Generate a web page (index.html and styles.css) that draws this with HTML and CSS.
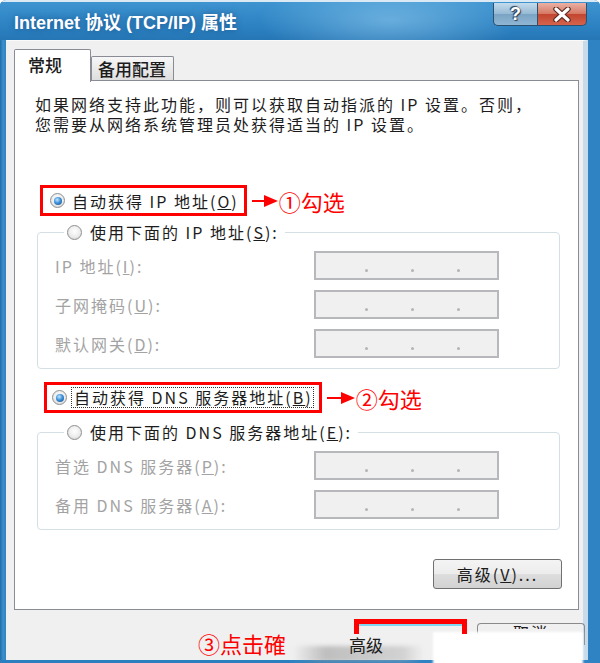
FILE: index.html
```html
<!DOCTYPE html>
<html lang="zh-CN">
    <head>
        <meta charset="UTF-8" />
        <meta name="viewport" content="width=device-width, initial-scale=1.0" />
        <title>Internet 协议 (TCP/IP) 属性</title>
        <link rel="stylesheet" href="styles.css">
    </head>
    <body>
        <div class="window">
            <div class="titlebar">
                <span class="title">Internet 协议 (TCP/IP) 属性</span>
                <div class="caption">
                    <span class="cap help">?</span>
                    <span class="cap close">
                        <svg width="20" height="15" viewBox="0 0 20 15">
                            <path d="M4 2 L16 13 M16 2 L4 13" stroke="#5a2a22" stroke-width="5.5" stroke-linecap="round" fill="none" />
                            <path d="M4 2 L16 13 M16 2 L4 13" stroke="#fff" stroke-width="3.2" stroke-linecap="round" fill="none" />
                        </svg>
                    </span>
                </div>
            </div>

            <div class="client">
                <div class="tabs">
                    <div class="tab active">常规</div>
                    <div class="tab">备用配置</div>
                </div>

                <div class="panel">
                    <p class="intro">如果网络支持此功能，则可以获取自动指派的 IP 设置。否则，<br>您需要从网络系统管理员处获得适当的 IP 设置。</p>

                    <div class="choice first">
                        <label class="radio marked">
                            <span class="dot on"></span>
                            <span>自动获得 IP 地址(<u>O</u>)</span>
                        </label>
                        <span class="note">
                            <svg class="arrow" width="26" height="14" viewBox="0 0 26 14">
                                <path d="M0 7 H14" stroke="#f00" stroke-width="2" />
                                <path d="M12 1 L26 7 L12 13 Z" fill="#f00" />
                            </svg>①勾选
                        </span>
                    </div>

                    <fieldset class="group">
                        <legend>
                            <label class="radio">
                                <span class="dot"></span>
                                <span>使用下面的 IP 地址(<u>S</u>):</span>
                            </label>
                        </legend>
                        <div class="field">
                            <span class="label">IP 地址(<u>I</u>):</span>
                            <span class="ipbox"><i></i><i></i><i></i></span>
                        </div>
                        <div class="field">
                            <span class="label">子网掩码(<u>U</u>):</span>
                            <span class="ipbox"><i></i><i></i><i></i></span>
                        </div>
                        <div class="field">
                            <span class="label">默认网关(<u>D</u>):</span>
                            <span class="ipbox"><i></i><i></i><i></i></span>
                        </div>
                    </fieldset>

                    <div class="choice second">
                        <label class="radio marked">
                            <span class="dot on"></span>
                            <span class="focus">自动获得 DNS 服务器地址(<u>B</u>)</span>
                        </label>
                        <span class="note">
                            <svg class="arrow" width="28" height="14" viewBox="0 0 28 14">
                                <path d="M0 7 H16" stroke="#f00" stroke-width="2" />
                                <path d="M14 1 L28 7 L14 13 Z" fill="#f00" />
                            </svg>②勾选
                        </span>
                    </div>

                    <fieldset class="group dns">
                        <legend>
                            <label class="radio">
                                <span class="dot"></span>
                                <span>使用下面的 DNS 服务器地址(<u>E</u>):</span>
                            </label>
                        </legend>
                        <div class="field">
                            <span class="label">首选 DNS 服务器(<u>P</u>):</span>
                            <span class="ipbox"><i></i><i></i><i></i></span>
                        </div>
                        <div class="field">
                            <span class="label">备用 DNS 服务器(<u>A</u>):</span>
                            <span class="ipbox"><i></i><i></i><i></i></span>
                        </div>
                    </fieldset>

                    <div class="actions">
                        <button class="btn">高级(<u>V</u>)...</button>
                    </div>
                </div>

                <div class="footer">
                    <span class="smudge"></span>
                    <span class="note step">③点击確</span>
                    <div class="ok">
                        <span class="ok-frame"></span>
                        <span class="ok-text">高级</span>
                    </div>
                    <div class="cancel"><span>取消</span></div>
                    <span class="patch"></span>
                </div>
            </div>
            <div class="frame-bottom"></div>
        </div>
    </body>
</html>
```

FILE: styles.css
```css
body {
    margin: 0;
    background: #fff;
    font-family: "Noto Sans CJK SC", "Liberation Sans", sans-serif;
    color: #1c1c1c;
}

.window {
    width: 600px;
    height: 663px;
    display: flex;
    flex-direction: column;
    background: linear-gradient(to right, #1f6ba8 0, #3b8fcb 3px, #2f83c3 6px);
    border-radius: 6px 6px 0 0;
    overflow: hidden;
}

/* title bar */
.titlebar {
    height: 40px;
    flex: none;
    display: flex;
    align-items: flex-start;
    border-top: 2px solid #dbe9f4;
    box-sizing: border-box;
    background:
        radial-gradient(ellipse 130px 40px at 390px 18px, rgba(150, 205, 240, 0.55), transparent),
        linear-gradient(#3d94d0, #2b80c0 70%, #2676b5);
}

.title {
    margin: 6px 0 0 14px;
    font-family: "Liberation Sans", "Noto Sans CJK SC", sans-serif;
    font-weight: bold;
    font-size: 18px;
    color: #fff;
    text-shadow: 0 0 6px rgba(20, 60, 110, 0.6);
}

.caption {
    margin-left: auto;
    margin-right: 13px;
    margin-top: 1px;
    display: flex;
}

.cap {
    height: 23px;
    display: flex;
    align-items: center;
    justify-content: center;
    border: 1px solid #2d4f70;
    border-top: none;
    box-sizing: border-box;
}

.help {
    width: 44px;
    border-radius: 0 0 0 5px;
    border-right: none;
    background: linear-gradient(#c4dbec, #95b9d4 50%, #7ba4c4 52%, #8fb6d3);
    font-family: "Liberation Sans", sans-serif;
    font-weight: bold;
    font-size: 18px;
    color: #fff;
    text-shadow: 0 0 1px #2c3e55, 1px 1px 1px #2c3e55, -1px -1px 1px #2c3e55;
}

.close {
    width: 50px;
    border-radius: 0 0 5px 0;
    background: linear-gradient(#eab1a4, #d67965 48%, #c2452f 52%, #d4644c);
}

/* client area */
.client {
    flex: 1;
    margin: 0 12px 0 6px;
    padding: 8px 4px 0 8px;
    background: #f0f0f0;
    border-top: 1px solid #fafafa;
    border-right: 5px solid #c7dbea;
    display: flex;
    flex-direction: column;
}

.tabs {
    display: flex;
    align-items: flex-end;
    height: 31px;
}

.tab {
    height: 24px;
    padding: 0 7px 0 6px;
    border: 1px solid #898c95;
    border-bottom: none;
    border-radius: 2px 2px 0 0;
    background: linear-gradient(#f7f7f7, #dedede);
    font-size: 17px;
    font-weight: 500;
    line-height: 24px;
    box-sizing: border-box;
}

.tab.active {
    height: 33px;
    width: 77px;
    margin-bottom: -2px;
    padding-left: 13px;
    background: #fff;
    position: relative;
    z-index: 1;
    line-height: 30px;
}

.panel {
    height: 530px;
    box-sizing: border-box;
    border: 1px solid #898c95;
    background: #fff;
    padding: 0 18px 0 20px;
    display: flex;
    flex-direction: column;
}

.intro {
    margin: 13px 0 0;
    font-size: 16px;
    letter-spacing: 2px;
    line-height: 20px;
    white-space: nowrap;
}

/* radio options */
.choice {
    display: flex;
    align-items: center;
}

.choice.first {
    margin-top: 51px;
}

.choice.second {
    margin-top: 13px;
}

.radio {
    display: flex;
    align-items: center;
    gap: 7px;
    font-size: 16px;
    letter-spacing: 2px;
    white-space: nowrap;
}

.radio.marked {
    height: 31px;
    box-sizing: border-box;
    border: 3px solid #f00;
    padding: 0 5px 0 7px;
}

.first .radio.marked {
    margin-left: 5px;
}

.second .radio.marked {
    margin-left: 9px;
    padding-left: 5px;
    gap: 4px;
}

.focus {
    border: 1px dotted #333;
    padding: 0 0 0 2px;
    line-height: 19px;
}

.dot {
    width: 15px;
    height: 15px;
    box-sizing: border-box;
    border-radius: 50%;
    border: 1px solid #8e8f90;
    background: radial-gradient(circle at 50% 40%, #fff 0, #ececec 55%, #cdcdcd 100%);
    display: flex;
    align-items: center;
    justify-content: center;
    flex: none;
}

.dot.on::after {
    content: "";
    width: 8px;
    height: 8px;
    border-radius: 50%;
    background: radial-gradient(circle at 40% 35%, #c2e8ff 0, #3f93da 45%, #0e4684 100%);
}

.note {
    display: flex;
    align-items: center;
    margin-left: 5px;
    color: #f00;
    font-size: 22px;
    line-height: 26px;
    white-space: nowrap;
    flex: none;
}

.arrow {
    margin-right: 1px;
}

/* group boxes */
.group {
    margin: 7px 0 0 2px;
    padding: 10px 0 10px 17px;
    border: 1px solid #d5dfe6;
    border-radius: 4px;
    min-width: 0;
    display: flex;
    flex-direction: column;
    gap: 10px;
}

.group.dns {
    margin-top: 10px;
}

.group legend {
    margin-left: 9px;
    padding: 0 6px 0 3px;
}

.group legend .radio {
    gap: 8px;
    height: 18px;
}

.field {
    display: grid;
    grid-template-columns: 259px 185px;
    align-items: center;
}

.label {
    color: #a3a3a3;
    font-size: 16px;
    letter-spacing: 2px;
    white-space: nowrap;
}

.ipbox {
    height: 29px;
    box-sizing: border-box;
    border: 2px solid #b7b8bc;
    background: #f0f0f0;
    display: flex;
    padding: 16px 0 0 49px;
    gap: 43px;
}

.ipbox i {
    width: 3px;
    height: 3px;
    border-radius: 50%;
    background: #b4b4b4;
}

.actions {
    display: flex;
    justify-content: flex-end;
    margin: 29px -2px 0 0;
}

.btn {
    width: 129px;
    height: 30px;
    border: 1px solid #707070;
    border-radius: 3px;
    background: linear-gradient(#f4f4f4, #ececec 50%, #dddddd 52%, #d2d2d2);
    font-family: inherit;
    font-size: 16px;
    letter-spacing: 2px;
    color: #1c1c1c;
    padding: 0;
}

/* bottom strip, partly cut off in the capture */
.footer {
    flex: 1;
    position: relative;
    display: flex;
    align-items: flex-start;
}

.step {
    margin: 20px 0 0 184px;
    font-size: 22px;
    position: relative;
    z-index: 1;
}

.ok {
    margin: 9px 0 0 68px;
    width: 113px;
    flex: none;
    display: flex;
    flex-direction: column;
    position: relative;
    z-index: 1;
}

.ok-frame {
    height: 10px;
    border: 5px solid #f00;
    border-bottom: none;
    box-shadow: inset 0 2px 0 #7fd6f0;
}

.ok-text {
    margin: 1px 0 0 -5px;
    font-size: 17px;
    line-height: 20px;
}

.cancel {
    margin: 13px 0 0 10px;
    width: 108px;
    height: 22px;
    flex: none;
    box-sizing: border-box;
    border: 1px solid #8a8a8a;
    border-bottom: none;
    border-radius: 4px 4px 0 0;
    display: flex;
    justify-content: center;
}

.cancel span {
    height: 8px;
    overflow: hidden;
    font-size: 16px;
    line-height: 22px;
    margin-top: -3px;
    letter-spacing: 2px;
}

.smudge {
    position: absolute;
    left: 279px;
    top: 36px;
    width: 130px;
    height: 16px;
    background: linear-gradient(to right, rgba(160, 160, 160, 0), rgba(150, 150, 150, 0.55) 25%, rgba(175, 175, 175, 0.45) 85%, rgba(200, 200, 200, 0));
    filter: blur(2px);
}

.patch {
    position: absolute;
    left: 419px;
    top: 22px;
    width: 150px;
    height: 40px;
    background: #fff;
    filter: blur(1px);
}

.frame-bottom {
    height: 3px;
    width: 290px;
    flex: none;
    background: #2b7fbf;
}
```
